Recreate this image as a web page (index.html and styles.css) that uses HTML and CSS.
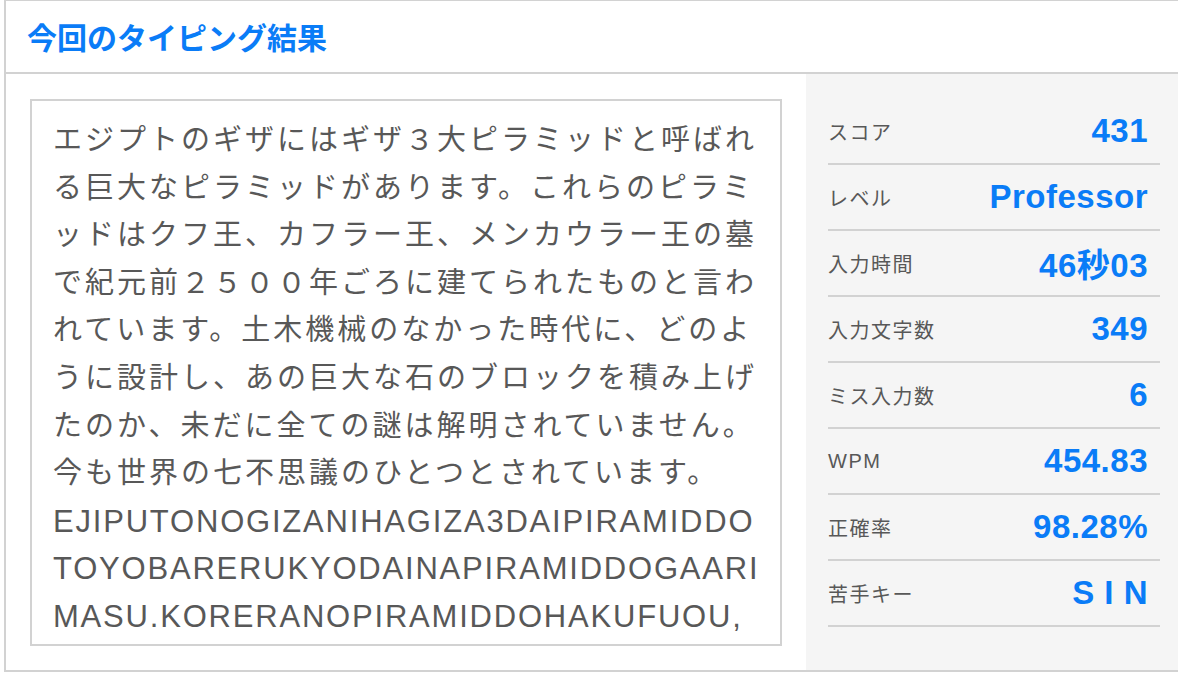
FILE: index.html
```html
<!DOCTYPE html>
<html lang="ja">
<head>
    <meta charset="UTF-8">
    <title>タイピング結果</title>
    <link rel="stylesheet" href="styles.css">
</head>
<body>
    <div class="result">
        <h2 class="result-title">今回のタイピング結果</h2>
        <div class="result-body">
            <div class="result-main">
                <div class="result-text">
                    <p class="kana">エジプトのギザにはギザ３大ピラミッドと呼ばれる巨大なピラミッドがあります。これらのピラミッドはクフ王、カフラー王、メンカウラー王の墓で紀元前２５００年ごろに建てられたものと言われています。土木機械のなかった時代に、どのように設計し、あの巨大な石のブロックを積み上げたのか、未だに全ての謎は解明されていません。今も世界の七不思議のひとつとされています。</p>
                    <p class="roma">EJIPUTONOGIZANIHAGIZA3DAIPIRAMIDDOTOYOBARERUKYODAINAPIRAMIDDOGAARIMASU.KORERANOPIRAMIDDOHAKUFUOU,</p>
                </div>
            </div>
            <dl class="stats">
                <div class="stat">
                    <dt>スコア</dt>
                    <dd>431</dd>
                </div>
                <div class="stat">
                    <dt>レベル</dt>
                    <dd>Professor</dd>
                </div>
                <div class="stat">
                    <dt>入力時間</dt>
                    <dd>46秒03</dd>
                </div>
                <div class="stat">
                    <dt>入力文字数</dt>
                    <dd>349</dd>
                </div>
                <div class="stat">
                    <dt>ミス入力数</dt>
                    <dd>6</dd>
                </div>
                <div class="stat">
                    <dt>WPM</dt>
                    <dd>454.83</dd>
                </div>
                <div class="stat">
                    <dt>正確率</dt>
                    <dd>98.28%</dd>
                </div>
                <div class="stat">
                    <dt>苦手キー</dt>
                    <dd>S I N</dd>
                </div>
            </dl>
        </div>
    </div>
</body>
</html>
```

FILE: styles.css
```css
/* result panel */
body {
    margin: 0;
    overflow: hidden;
    background: #FFF;
    font-family: "Liberation Sans", "Noto Sans CJK JP", sans-serif;
}

.result {
    margin: -1px 0 0 4px;
    width: 1176px;
    border: 2px solid #D2D2D2;
}

.result-title {
    margin: 0;
    height: 71px;
    padding-left: 21px;
    border-bottom: 2px solid #D2D2D2;
    font: bold 30px/71px "Noto Sans CJK JP", sans-serif;
    color: #0A7CF7;
}

.result-body {
    display: flex;
    height: 596px;
}

.result-main {
    width: 800px;
    box-sizing: border-box;
    padding: 25px 24px 0 24px;
}

.result-text {
    height: 547px;
    box-sizing: border-box;
    border: 2px solid #D2D2D2;
    padding: 16px 20px 0 21px;
    overflow: hidden;
    font-size: 29px;
    line-height: 47.6px;
    letter-spacing: 3px;
    color: #585858;
}

.result-text p {
    margin: 0;
}

.result-text .roma {
    font-size: 31px;
    letter-spacing: 1.8px;
    word-break: break-all;
}

.stats {
    margin: 0;
    width: 376px;
    box-sizing: border-box;
    padding: 25px 0 0 22px;
    background: #F5F5F5;
}

.stat {
    display: flex;
    justify-content: space-between;
    align-items: center;
    width: 332px;
    height: 66px;
    box-sizing: border-box;
    padding-right: 12px;
    border-bottom: 2px solid #D2D2D2;
}

.stat dt {
    font-size: 20px;
    letter-spacing: 1.5px;
    color: #585858;
}

.stat dd {
    margin: 0;
    font-size: 33px;
    font-weight: bold;
    letter-spacing: 0.5px;
    color: #0A7CF7;
}
```
